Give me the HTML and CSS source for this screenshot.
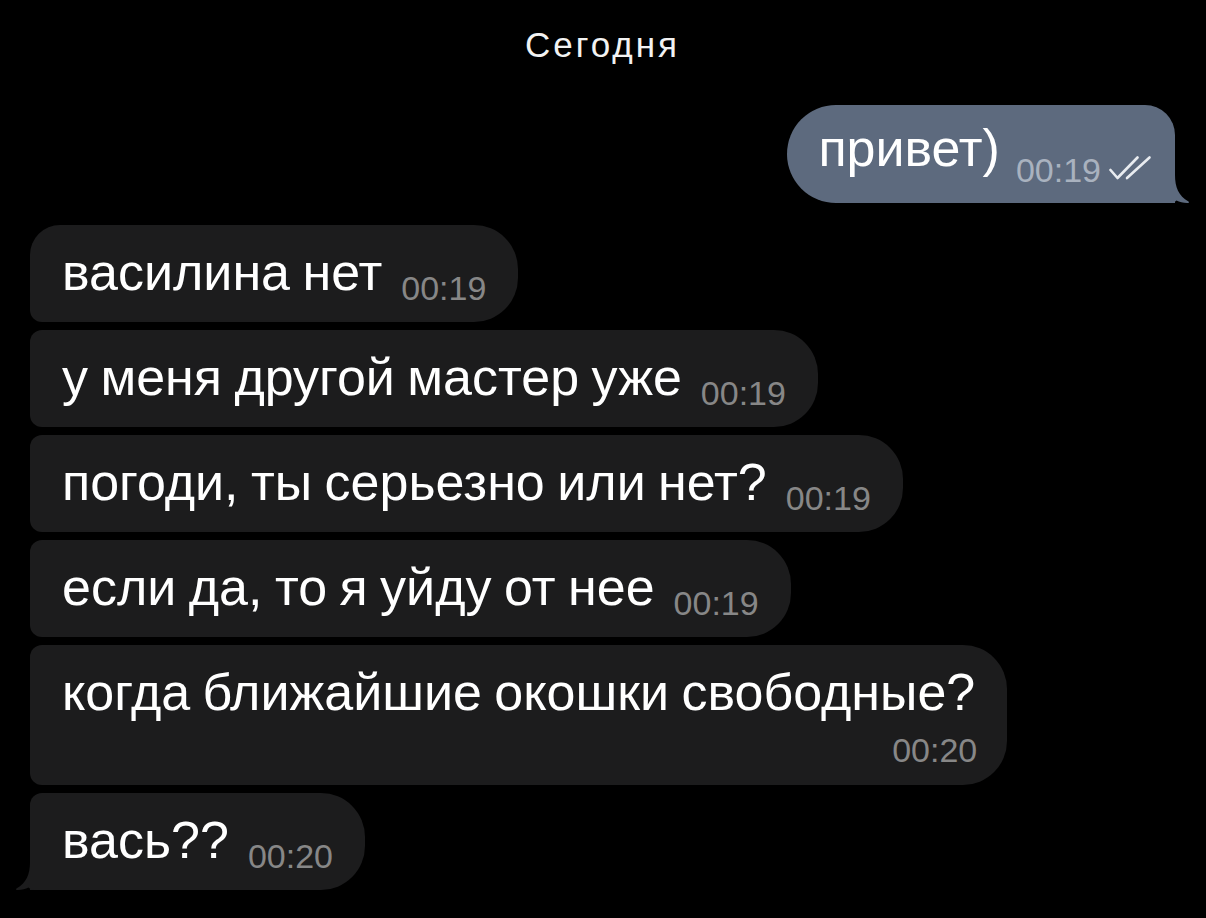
FILE: index.html
```html
<!DOCTYPE html>
<html lang="ru">
<head>
<meta charset="utf-8">
<title>Чат</title>
<link rel="stylesheet" href="styles.css">
</head>
<body>
<div class="chat">
  <div class="day">Сегодня</div>

  <div class="row out">
    <div class="bubble out-b">
      <span class="text">привет)</span><span class="meta"><span class="time">00:19</span><svg class="checks" viewBox="0 0 44 25"><path d="M1.5 15 L8.5 23 L28.5 2.5"/><path d="M18 23 L40.5 2.5"/></svg></span>
      <svg class="tail" viewBox="0 0 20 28"><path d="M0 0 H4 C4 12 7.5 21 17.5 26.4 C18.4 26.9 18.1 27.9 17 27.9 C12.5 28 8.5 27.2 5.5 25.6 C3.8 26.9 2 28 0 28 Z"/></svg>
    </div>
  </div>

  <div class="group">
    <div class="bubble in-b first"><span class="text">василина нет</span><span class="meta"><span class="time">00:19</span></span></div>
    <div class="bubble in-b"><span class="text">у меня другой мастер уже</span><span class="meta"><span class="time">00:19</span></span></div>
    <div class="bubble in-b"><span class="text">погоди, ты серьезно или нет?</span><span class="meta"><span class="time">00:19</span></span></div>
    <div class="bubble in-b"><span class="text">если да, то я уйду от нее</span><span class="meta"><span class="time">00:19</span></span></div>
    <div class="bubble in-b multi"><span class="text">когда ближайшие окошки свободные?</span><span class="meta"><span class="time">00:20</span></span></div>
    <div class="bubble in-b last"><span class="text">вась??</span><span class="meta"><span class="time">00:20</span></span>
      <svg class="tail" viewBox="0 0 20 28"><path d="M0 0 H4 C4 12 7.5 21 17.5 26.4 C18.4 26.9 18.1 27.9 17 27.9 C12.5 28 8.5 27.2 5.5 25.6 C3.8 26.9 2 28 0 28 Z"/></svg>
    </div>
  </div>
</div>
</body>
</html>
```

FILE: styles.css
```css
html, body {
  margin: 0;
  background: #000;
}

body {
  font-family: "Liberation Sans", Arial, sans-serif;
  color: #fff;
  width: 1206px;
  height: 918px;
  overflow: hidden;
}

.chat {
  display: flex;
  flex-direction: column;
  padding: 25px 31px 0 30px;
}

.day {
  font-size: 35px;
  line-height: 40px;
  letter-spacing: 3px;
  text-align: center;
  color: #f2f2f2;
  margin-bottom: 40px;
}

.row {
  display: flex;
}

.row.out {
  justify-content: flex-end;
  margin-bottom: 22px;
}

.group {
  display: flex;
  flex-direction: column;
  align-items: flex-start;
  gap: 8px;
}

.bubble {
  position: relative;
  display: flex;
  align-items: flex-end;
  white-space: nowrap;
  font-size: 52px;
  word-spacing: -2px;
}

.text {
  line-height: 57px;
}

.meta {
  display: flex;
  align-items: flex-end;
  margin-left: 19px;
  word-spacing: 0;
}

.time {
  font-size: 34px;
  line-height: 25px;
  color: #878787;
}

/* outgoing */
.out-b {
  background: #5d6a7e;
  padding: 15px 22px 20px 31px;
  border-radius: 49px 30px 0 49px;
}

.out-b .text {
  margin-bottom: 6px;
}

.out-b .meta {
  margin-left: 16px;
}

.out-b .time {
  color: #a9b2bf;
}

.checks {
  width: 44px;
  height: 25px;
  margin-left: 8px;
  margin-bottom: 3px;
  fill: none;
  stroke: #e9ecf0;
  stroke-width: 2.6;
  stroke-linecap: round;
  stroke-linejoin: round;
}

.tail {
  position: absolute;
  bottom: 0;
  width: 20px;
  height: 28px;
}

.out-b .tail {
  right: -16px;
  fill: #5d6a7e;
}

/* incoming */
.in-b {
  background: #1c1c1d;
  padding: 19px 32px 21px 32px;
  border-radius: 12px 44px 44px 12px;
}

.in-b.first {
  border-top-left-radius: 30px;
}

.in-b.last {
  border-bottom-left-radius: 0;
}

.in-b.last .tail {
  left: -16px;
  transform: scaleX(-1);
  fill: #1c1c1d;
}

.in-b.multi {
  flex-direction: column;
  align-items: stretch;
  padding-bottom: 22px;
}

.in-b.multi .meta {
  align-self: flex-end;
  margin-left: 0;
  margin-top: 17px;
  margin-right: -2px;
}
```
